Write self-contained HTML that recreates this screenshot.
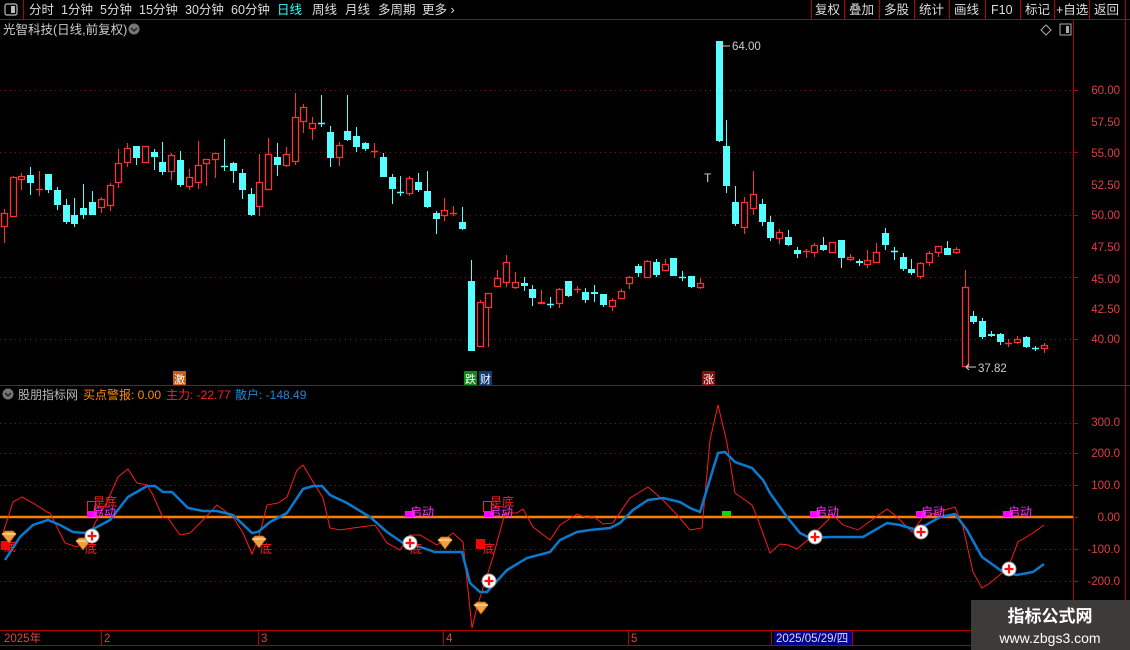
<!DOCTYPE html>
<html><head><meta charset="utf-8">
<style>
html,body{margin:0;padding:0;background:#000;width:1130px;height:650px;overflow:hidden;font-family:"Liberation Sans","Noto Sans CJK SC",sans-serif;}
svg{display:block}
text{font-family:"Liberation Sans","Noto Sans CJK SC",sans-serif;}
</style></head><body>
<svg id="s" width="1130" height="650" viewBox="0 0 1130 650" xmlns="http://www.w3.org/2000/svg">
<rect width="1130" height="650" fill="#000"/>
<line x1="0" y1="19.5" x2="1130" y2="19.5" stroke="#b00000"/>
<line x1="23.5" y1="0" x2="23.5" y2="19" stroke="#b00000"/>
<rect x="5" y="4" width="12" height="11" rx="2" fill="none" stroke="#bbb" stroke-width="1.2"/>
<rect x="11" y="6" width="4" height="7" fill="#bbb"/>
<g font-size="12.5" fill="#ddd">
<text x="29" y="14">分时</text><text x="61" y="14">1分钟</text><text x="100" y="14">5分钟</text><text x="139" y="14">15分钟</text><text x="185" y="14">30分钟</text><text x="231" y="14">60分钟</text><text x="277" y="14" fill="#3ff">日线</text><text x="312" y="14">周线</text><text x="345" y="14">月线</text><text x="378" y="14">多周期</text><text x="422" y="14">更多 ›</text>
</g>
<g stroke="#b00000"><line x1="811.5" y1="0" x2="811.5" y2="19"/><line x1="844.5" y1="0" x2="844.5" y2="19"/><line x1="879.5" y1="0" x2="879.5" y2="19"/><line x1="914.5" y1="0" x2="914.5" y2="19"/><line x1="949.5" y1="0" x2="949.5" y2="19"/><line x1="985.5" y1="0" x2="985.5" y2="19"/><line x1="1020.5" y1="0" x2="1020.5" y2="19"/><line x1="1054.5" y1="0" x2="1054.5" y2="19"/><line x1="1089.5" y1="0" x2="1089.5" y2="19"/><line x1="1125.5" y1="0" x2="1125.5" y2="650"/></g>
<g font-size="12.5" fill="#ddd">
<text x="815" y="14">复权</text><text x="849" y="14">叠加</text><text x="884" y="14">多股</text><text x="919" y="14">统计</text><text x="954" y="14">画线</text><text x="991" y="14">F10</text><text x="1025" y="14">标记</text><text x="1056" y="14">+自选</text><text x="1094" y="14">返回</text>
</g>
<text x="3" y="34" font-size="12.5" fill="#ccc">光智科技(日线,前复权)</text>
<circle cx="134" cy="29" r="5.5" fill="#777"/><path d="M131 28 l3 3 l3 -3" stroke="#222" stroke-width="1.5" fill="none"/>
<path d="M1046 25 l5 5 l-5 5 l-5 -5z" fill="none" stroke="#aaa"/>
<rect x="1060" y="24" width="11" height="11" fill="none" stroke="#aaa"/><rect x="1066" y="26" width="3" height="7" fill="#aaa"/>
<line x1="1073.5" y1="20" x2="1073.5" y2="645" stroke="#b00000"/>
<line x1="0" y1="385.5" x2="1130" y2="385.5" stroke="#b00000"/>
<line x1="0" y1="630.5" x2="1073" y2="630.5" stroke="#b00000"/>
<line x1="0" y1="645.5" x2="1073" y2="645.5" stroke="#b00000"/>
<g stroke="#8a1010" stroke-dasharray="1 4"><line x1="0" y1="90.5" x2="1073" y2="90.5"/><line x1="0" y1="152.5" x2="1073" y2="152.5"/><line x1="0" y1="215.5" x2="1073" y2="215.5"/><line x1="0" y1="277.5" x2="1073" y2="277.5"/><line x1="0" y1="339.5" x2="1073" y2="339.5"/>
<line x1="0" y1="423.5" x2="1073" y2="423.5"/><line x1="0" y1="453.5" x2="1073" y2="453.5"/><line x1="0" y1="485.5" x2="1073" y2="485.5"/><line x1="0" y1="549.5" x2="1073" y2="549.5"/><line x1="0" y1="581.5" x2="1073" y2="581.5"/></g>
<g font-size="11.5" fill="#e04040" text-anchor="end">
<text x="1120" y="94">60.00</text><text x="1120" y="126">57.50</text><text x="1120" y="157">55.00</text><text x="1120" y="189">52.50</text><text x="1120" y="219">50.00</text><text x="1120" y="251">47.50</text><text x="1120" y="283">45.00</text><text x="1120" y="313">42.50</text><text x="1120" y="343">40.00</text>
<text x="1120" y="426">300.0</text><text x="1120" y="457">200.0</text><text x="1120" y="489">100.0</text><text x="1120" y="521">0.00</text><text x="1120" y="553">-100.0</text><text x="1120" y="585">-200.0</text>
</g>
<g stroke="#b00000"><line x1="1073" y1="90.5" x2="1078" y2="90.5"/><line x1="1073" y1="152.5" x2="1078" y2="152.5"/><line x1="1073" y1="215.5" x2="1078" y2="215.5"/><line x1="1073" y1="277.5" x2="1078" y2="277.5"/><line x1="1073" y1="339.5" x2="1078" y2="339.5"/><line x1="1073" y1="423.5" x2="1078" y2="423.5"/><line x1="1073" y1="453.5" x2="1078" y2="453.5"/><line x1="1073" y1="485.5" x2="1078" y2="485.5"/><line x1="1073" y1="517.5" x2="1078" y2="517.5"/><line x1="1073" y1="549.5" x2="1078" y2="549.5"/><line x1="1073" y1="581.5" x2="1078" y2="581.5"/></g>
<g id="candles"></g>
<g fill="#ccc" font-size="11.5"><text x="732" y="50">64.00</text><text x="978" y="372">37.82</text><text x="704" y="182" font-size="12">T</text></g>
<path d="M730 46 H720 M722 44 l-2 2 l2 2" stroke="#ccc" fill="none"/>
<path d="M976 367 H966 M969 364 l-3 3 l3 3" stroke="#ccc" fill="none"/>
<rect x="173" y="371" width="13" height="14" fill="#c85a10"/><text x="174" y="383" font-size="11" fill="#fff">激</text>
<rect x="464" y="371" width="13" height="14" fill="#118811"/><text x="465" y="383" font-size="11" fill="#fff">跌</text>
<rect x="479" y="371" width="13" height="14" fill="#123a78"/><text x="480" y="383" font-size="11" fill="#fff">财</text>
<rect x="702" y="371" width="13" height="14" fill="#8a0a0a"/><text x="703" y="383" font-size="11" fill="#fff">涨</text>
<circle cx="8" cy="394" r="5.5" fill="#777"/><path d="M5 393 l3 3 l3 -3" stroke="#222" stroke-width="1.5" fill="none"/>
<g font-size="12"><text x="18" y="399" fill="#bbb">股朋指标网</text><text x="83" y="399" fill="#ff8c00">买点警报: 0.00</text><text x="166" y="399" fill="#ff2020">主力: -22.77</text><text x="235" y="399" fill="#1e88d8">散户: -148.49</text></g>
<line x1="0" y1="517" x2="1073" y2="517" stroke="#ff8000" stroke-width="2.5"/>
<polyline fill="none" stroke="#ff1a1a" stroke-width="1" points="3,533 13,502 22,497 33,503 47,512 50,513 57,527 65,543 77,547 87,540 95,523 107,502 118,477 128,469 137,483 147,485 153,495 163,518 168,518 180,535 190,533 203,520 217,505 233,517 243,533 252,554 260,533 267,505 278,503 287,497 297,470 303,465 312,480 323,498 330,528 340,530 353,528 375,525 387,543 400,550 410,535 420,535 437,545 453,533 463,542 472,628 477,607 493,557 505,513 517,513 523,509 533,527 550,540 560,525 577,514 587,518 593,516 603,524 613,523 630,498 648,487 663,500 677,515 690,530 702,528 710,440 718,405 727,443 735,493 752,505 757,517 770,553 780,544 788,545 797,549 810,538 823,525 833,515 843,525 858,530 887,509 897,517 912,532 923,517 945,510 955,507 963,527 973,572 982,588 990,583 1008,568 1018,542 1033,533 1044,525"/>
<polyline fill="none" stroke="#0a7ad0" stroke-width="2.5" points="5,560 20,537 33,525 48,520 60,525 73,532 85,533 97,527 110,520 128,497 147,486 155,486 163,492 172,492 188,508 203,511 217,511 233,515 252,533 258,532 270,522 287,513 303,489 313,486 322,486 330,495 347,503 370,517 387,532 403,543 420,547 435,552 462,552 470,583 480,592 487,592 507,570 527,558 550,552 560,540 577,532 590,530 610,528 620,523 633,510 648,500 663,498 680,502 690,508 700,512 718,453 725,452 735,462 752,468 763,480 770,493 787,517 800,533 810,538 830,537 863,537 887,523 900,525 917,530 940,517 955,514 967,530 982,557 1003,572 1017,575 1033,572 1044,564"/>
<g font-size="12" fill="#ff30ff">
<rect x="87" y="511" width="10" height="6" fill="#ff00ff"/><text x="92" y="516">启动</text>
<rect x="405" y="511" width="10" height="6" fill="#ff00ff"/><text x="410" y="516">启动</text>
<rect x="484" y="511" width="10" height="6" fill="#ff00ff"/><text x="489" y="516">启动</text>
<rect x="810" y="511" width="10" height="6" fill="#ff00ff"/><text x="815" y="516">启动</text>
<rect x="916" y="511" width="10" height="6" fill="#ff00ff"/><text x="921" y="516">启动</text>
<rect x="1003" y="511" width="10" height="6" fill="#ff00ff"/><text x="1008" y="516">启动</text>
</g>
<g font-size="12" fill="#ff2020"><text x="93" y="506">是底</text><text x="490" y="506">是底</text></g>
<rect x="87.5" y="501.5" width="8" height="10" fill="none" stroke="#ff2020"/><rect x="483.5" y="501.5" width="8" height="10" fill="none" stroke="#ff2020"/>
<g font-size="12" fill="#ff2020"><text x="4" y="551">底</text><text x="85" y="553">底</text><text x="260" y="553">底</text><text x="410" y="553">底</text><text x="483" y="553">底</text></g>
<rect x="1" y="541" width="9" height="9" fill="#ff0000"/><rect x="476" y="539" width="9" height="10" fill="#ff0000"/>
<rect x="722" y="511" width="9" height="5" fill="#00e000"/>
<g id="gems"></g>
<g id="plus"></g>
<g stroke="#b00000"><line x1="101.5" y1="630" x2="101.5" y2="645"/><line x1="258.5" y1="630" x2="258.5" y2="645"/><line x1="443.5" y1="630" x2="443.5" y2="645"/><line x1="628.5" y1="630" x2="628.5" y2="645"/><line x1="771.5" y1="630" x2="771.5" y2="645"/><line x1="852.5" y1="630" x2="852.5" y2="645"/></g>
<g font-size="11.5" fill="#e04040"><text x="4" y="642">2025年</text><text x="104" y="642">2</text><text x="261" y="642">3</text><text x="446" y="642">4</text><text x="631" y="642">5</text></g>
<rect x="774" y="631" width="78" height="14" fill="#000090"/><text x="776" y="642" font-size="11.5" fill="#ddd">2025/05/29/四</text>
<rect x="971" y="600" width="159" height="50" fill="#3d3a3a"/>
<text x="1050" y="622" font-size="17" font-weight="bold" fill="#fff" text-anchor="middle">指标公式网</text>
<text x="1050" y="643" font-size="14" fill="#fff" text-anchor="middle">www.zbgs3.com</text>
</svg>
<script>
var D=[[4,213,227,209,243,1],[13,177,217,176,217,1],[21,176,180,173,190,1],[30,175,183,167,195,0],[39,189,189,171,196,1],[48,174,190,174,193,0],[57,190,205,187,210,0],[66,205,222,199,224,0],[74,215,224,198,227,0],[83,208,215,184,219,0],[92,202,215,191,215,0],[101,199,208,197,213,1],[110,185,206,183,211,1],[118,163,183,149,188,1],[127,148,163,143,167,1],[136,146,158,146,165,0],[145,146,163,146,163,1],[154,152,157,149,170,0],[162,162,172,142,175,0],[171,155,172,153,180,1],[180,160,185,151,187,0],[189,177,187,169,190,1],[198,165,183,141,189,1],[206,159,164,159,186,1],[215,153,160,153,178,1],[224,166,166,139,171,0],[233,163,171,162,183,0],[242,173,190,169,199,0],[251,194,215,188,216,0],[259,182,207,154,216,1],[268,154,190,138,190,1],[277,157,165,143,176,0],[286,154,166,147,167,1],[295,117,162,93,165,1],[303,107,122,104,133,1],[312,123,129,117,140,1],[321,123,123,95,127,0],[330,132,158,126,167,0],[339,145,158,142,166,1],[347,131,140,95,141,0],[356,136,147,127,152,0],[365,143,149,142,151,0],[374,151,151,143,158,1],[383,157,177,153,177,0],[392,177,189,174,204,0],[400,192,192,176,196,0],[409,178,194,176,196,1],[418,182,190,173,192,0],[427,191,207,171,208,0],[436,213,219,211,234,0],[444,210,216,198,221,1],[453,213,213,206,216,1],[462,222,229,207,230,0],[471,281,351,260,351,0],
[480,302,347,300,347,1],[488,293,308,293,347,1],[497,278,287,270,287,1],[506,262,283,255,287,1],[515,282,288,272,289,1],[524,283,286,277,291,0],[532,289,298,285,306,0],[541,302,304,290,304,1],[550,304,304,297,308,0],[559,289,304,288,308,1],[568,281,296,281,297,0],[577,289,289,286,293,1],[585,292,300,288,303,0],[594,292,294,285,302,0],[603,294,305,294,307,0],[612,300,307,298,311,1],[621,291,299,289,299,1],[629,277,284,276,289,1],[638,266,273,264,277,0],[647,261,278,260,278,1],[656,262,275,259,277,0],[665,264,271,259,271,1],[673,258,276,258,276,0],[682,277,277,271,281,0],[691,276,287,276,288,0],[700,283,288,278,289,1],[719,41,141,41,142,0],[726,146,186,120,193,0],[735,202,224,186,226,0],[744,202,228,197,234,1],[753,194,209,171,215,1],[762,204,222,199,226,0],[770,222,238,216,241,0],[779,232,239,229,244,1],[788,237,245,230,246,0],[797,250,254,247,258,0],[806,251,251,249,258,1],[814,245,253,243,257,1],[823,245,250,237,251,0],[832,242,253,242,253,1],[841,240,258,240,268,0],[850,257,260,254,261,1],[859,261,263,259,266,0],[867,260,265,250,268,1],[876,252,263,243,263,1],[885,233,245,228,250,0],[894,251,251,247,260,0],[903,257,269,253,271,0],[911,269,273,259,275,0],[920,263,277,262,279,1],[929,253,263,251,266,1],[938,246,253,246,257,1],[947,248,255,241,255,0],[956,249,253,247,254,1],[965,287,367,270,367,1],[973,316,322,311,324,0],[982,321,337,318,339,0],[991,334,336,331,337,0],[1000,334,342,333,345,0],[1008,343,343,339,347,1],[1017,339,343,336,344,1],[1026,337,347,336,348,0],[1035,348,348,346,351,0],[1044,345,349,343,353,1]];
var g=document.getElementById("candles"),h="";
D.forEach(function(d){var x=d[0],t=d[1],b=d[2],c=d[5]?"#ff3030":"#55ffff";
h+='<line x1="'+(x+.5)+'" y1="'+d[3]+'" x2="'+(x+.5)+'" y2="'+t+'" stroke="'+c+'"/>';
h+='<line x1="'+(x+.5)+'" y1="'+b+'" x2="'+(x+.5)+'" y2="'+d[4]+'" stroke="'+c+'"/>';
if(b-t<1.5){h+='<line x1="'+(x-3)+'" y1="'+(t+.5)+'" x2="'+(x+4)+'" y2="'+(t+.5)+'" stroke="'+c+'" stroke-width="1.5"/>';}
else if(d[5]){h+='<rect x="'+(x-2.5)+'" y="'+(t+.5)+'" width="6" height="'+(b-t-1)+'" fill="#000" stroke="'+c+'" stroke-width="1.3"/>';}
else{h+='<rect x="'+(x-3)+'" y="'+t+'" width="7" height="'+(b-t)+'" fill="'+c+'"/>';}
});
g.innerHTML=h;
var gm="";[[9,537],[83,544],[259,542],[445,543],[481,608]].forEach(function(p){var x=p[0],y=p[1];
gm+='<path d="M'+(x-7)+' '+(y-3)+' L'+(x-4)+' '+(y-6)+' L'+(x+4)+' '+(y-6)+' L'+(x+7)+' '+(y-3)+' L'+x+' '+(y+6)+'Z" fill="#f0a040" stroke="#b86010" stroke-width="0.8"/><path d="M'+(x-7)+' '+(y-3)+' H'+(x+7)+'" stroke="#fff0c0"/>';});
document.getElementById("gems").innerHTML=gm;
var pl="";[[92,536],[410,543],[489,581],[815,537],[921,532],[1009,569]].forEach(function(p){var x=p[0],y=p[1];
pl+='<circle cx="'+x+'" cy="'+y+'" r="7" fill="#fff" stroke="#999"/><path d="M'+(x-4.5)+' '+y+' H'+(x+4.5)+' M'+x+' '+(y-4.5)+' V'+(y+4.5)+'" stroke="#ff1010" stroke-width="2.2"/>';});
document.getElementById("plus").innerHTML=pl;
</script>
</body></html>
